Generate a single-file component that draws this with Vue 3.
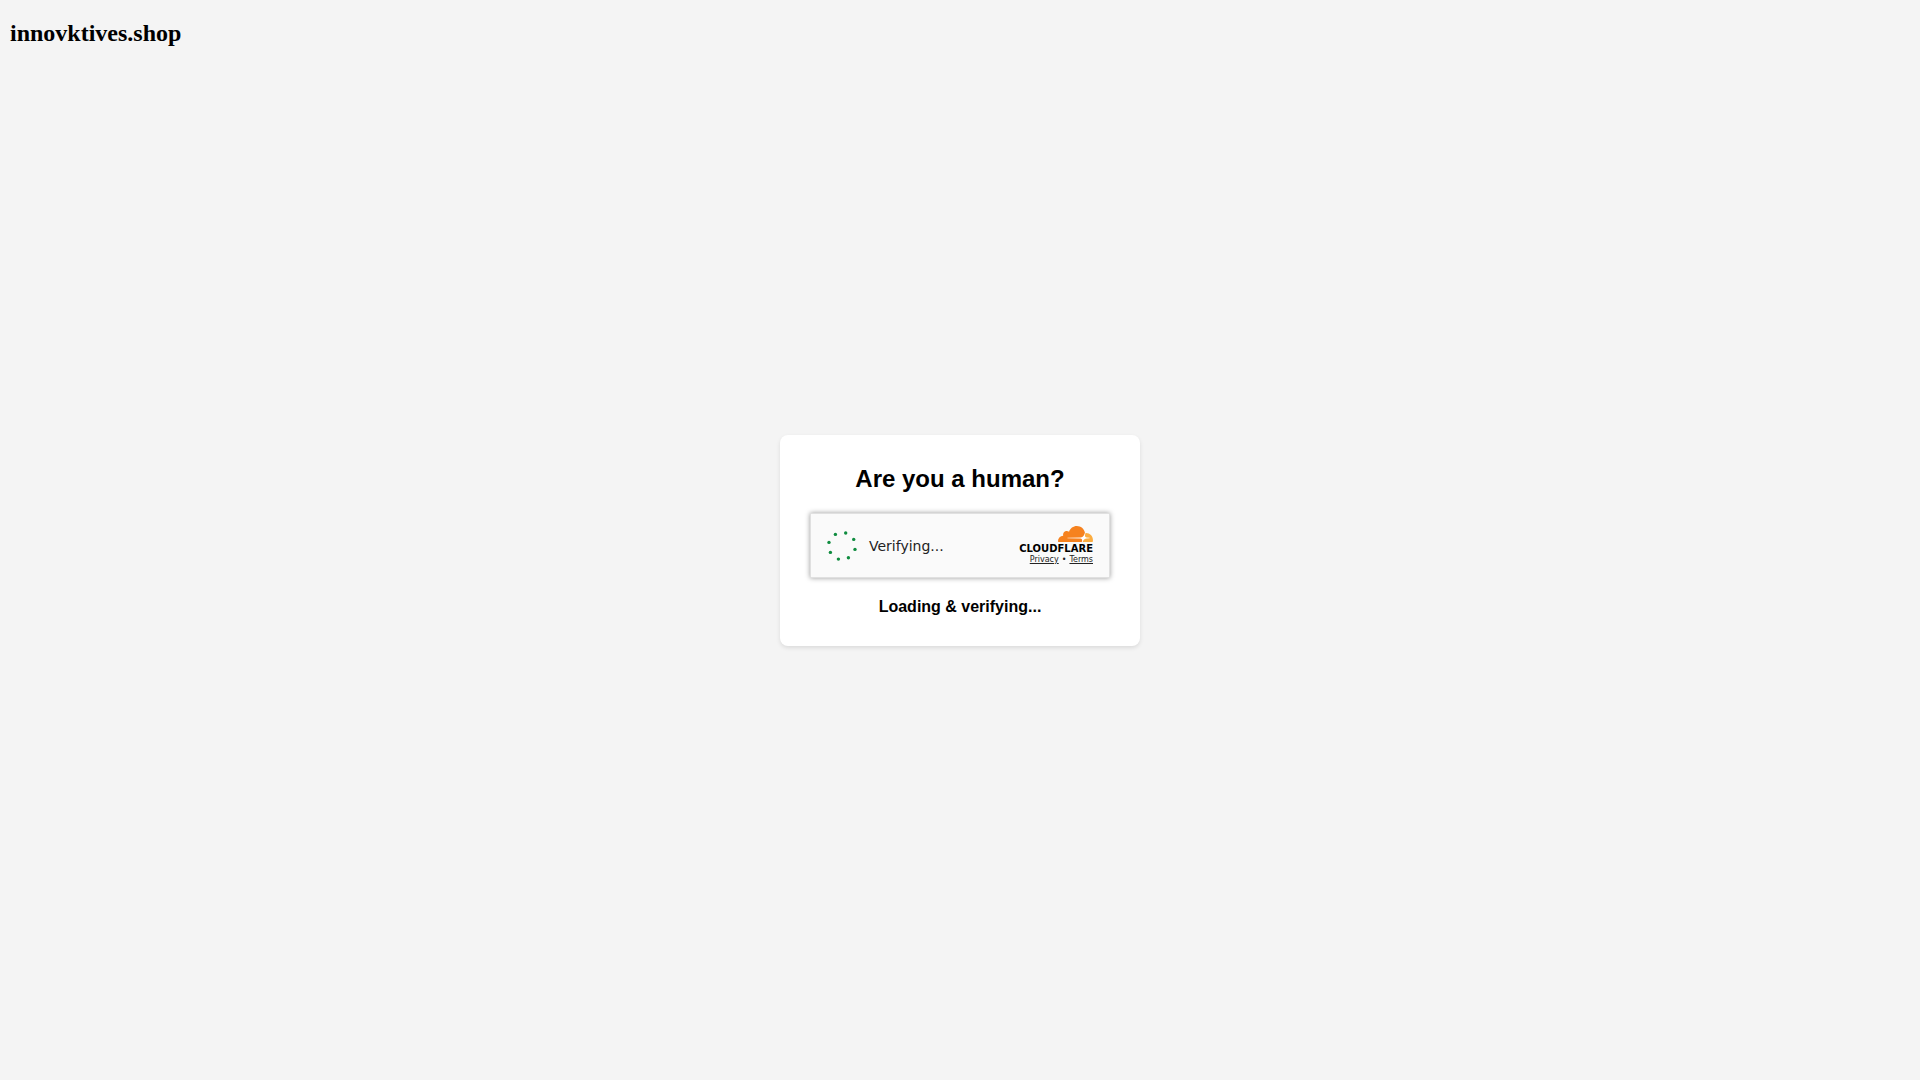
<script setup>
const dots = [
  [8.4, 3.4], [18.7, 2], [26.7, 8.4], [28, 18.4],
  [21.4, 26.8], [11.4, 28.1], [3.4, 21.4], [2, 11.4],
]
</script>

<template>
  <div class="page">
    <h1 class="site">innovktives.shop</h1>
    <main class="card">
      <h2 class="question">Are you a human?</h2>
      <section class="widget">
        <div class="status" role="status">
          <svg class="spinner" viewBox="0 0 30 30" aria-hidden="true">
            <circle v-for="([x, y], i) in dots" :key="i" :cx="x" :cy="y" r="1.7" />
          </svg>
          <span>Verifying...</span>
        </div>
        <div class="brand">
          <svg class="logo" viewBox="0 0 73 26" role="img" aria-label="Cloudflare">
            <path fill="#fff" d="M68.8 10.4L65 8.2L64.3 7.9L48.6 8V16H68.8Z" />
            <path fill="#f6821f" d="M61.8848 15.7841L62.0632 15.1578C62.2758 14.4126 62.1967 13.7239 61.8401 13.2178C61.5118 12.7517 60.9649 12.4773 60.3007 12.4453L47.7201 12.2836C47.6811 12.2829 47.6428 12.2728 47.6083 12.2542C47.5738 12.2356 47.5442 12.209 47.5217 12.1766C47.4996 12.1431 47.4856 12.1049 47.4807 12.0649C47.4758 12.025 47.4801 11.9844 47.4933 11.9465C47.5149 11.8839 47.5541 11.8291 47.6061 11.7888C47.658 11.7486 47.7204 11.7247 47.7856 11.7201L60.4827 11.5566C61.9889 11.4864 63.6196 10.2462 64.1905 8.73372L64.9146 6.81361C64.9443 6.73242 64.951 6.64444 64.9341 6.55957C64.112 2.80652 60.8115 0 56.8652 0C53.2293 0 50.1421 2.38158 49.0347 5.69186C48.2864 5.12186 47.3535 4.85982 46.4228 4.95823C44.6785 5.13401 43.276 6.55928 43.1034 8.32979C43.059 8.77189 43.0915 9.21845 43.1992 9.64918C40.3497 9.73347 38.0645 12.1027 38.0645 15.0151C38.0649 15.2751 38.0838 15.5347 38.1212 15.7919C38.1294 15.8513 38.1584 15.9057 38.2029 15.9452C38.2474 15.9847 38.3044 16.0067 38.3635 16.0071L61.5894 16.0099C61.6616 16.0088 61.7252 15.9862 61.7772 15.9455C61.8293 15.9049 61.867 15.8483 61.8848 15.7841Z" />
            <path fill="#fbad41" d="M66.0758 6.95285C65.9592 6.95285 65.843 6.95582 65.7274 6.96177C65.7087 6.96312 65.6904 6.96719 65.6729 6.97385C65.6426 6.98437 65.6152 7.00219 65.5931 7.02579C65.5711 7.04939 65.555 7.07806 65.5462 7.10936L65.0515 8.84333C64.8389 9.58847 64.918 10.2766 65.2749 10.7827C65.6029 11.2494 66.1498 11.5233 66.814 11.5552L69.4959 11.7186C69.5336 11.7199 69.5705 11.73 69.6037 11.7483C69.6369 11.7666 69.6654 11.7925 69.687 11.8239C69.7092 11.8576 69.7234 11.896 69.7283 11.9363C69.7332 11.9765 69.7288 12.0173 69.7153 12.0555C69.6937 12.118 69.6546 12.1727 69.6028 12.2129C69.5509 12.2531 69.4887 12.2771 69.4236 12.2819L66.6371 12.4453C65.1241 12.5161 63.4937 13.7558 62.9233 15.2682L62.722 15.8022C62.7136 15.8245 62.7105 15.8486 62.713 15.8724C62.7155 15.8961 62.7236 15.9189 62.7365 15.9389C62.7494 15.9589 62.7668 15.9755 62.7873 15.9872C62.8077 15.9988 62.8306 16.0053 62.854 16.006H72.4502C72.5055 16.0066 72.5595 15.9888 72.6039 15.9555C72.6483 15.9221 72.6805 15.875 72.6956 15.8213C72.8654 15.2159 72.951 14.5893 72.95 13.9596C72.9494 10.0972 69.8627 6.96571 66.0758 6.95285Z" />
            <text x="73" y="26" text-anchor="end">CLOUDFLARE</text>
          </svg>
          <div class="terms">
            <a href="#privacy">Privacy</a><span class="dot">•</span><a href="#terms">Terms</a>
          </div>
        </div>
      </section>
      <p class="note">Loading &amp; verifying...</p>
    </main>
  </div>
</template>

<style>
body {
  background: #f4f4f4;
}
</style>

<style scoped>
.page {
  display: grid;
  grid-template-rows: 1fr auto 1fr;
  box-sizing: border-box;
  min-height: 100vh;
  padding-top: 1px;
}
.site {
  margin: 19px 10px 0;
  font: bold 24px/27px "Liberation Serif", serif;
  color: #000;
}
.card {
  justify-self: center;
  box-sizing: border-box;
  width: 360px;
  max-width: 100%;
  padding: 30px;
  border-radius: 8px;
  background: #fff;
  box-shadow: 0 2px 4px rgba(0, 0, 0, 0.1);
  font-family: "Liberation Sans", sans-serif;
  text-align: center;
  color: #000;
}
.question {
  margin: 0 0 20px;
  font-size: 24px;
  line-height: 28px;
}
.widget {
  display: flex;
  align-items: center;
  justify-content: space-between;
  box-sizing: border-box;
  height: 65px;
  padding: 0 16px;
  border: 1px solid #e0e0e0;
  background: #fafafa;
  box-shadow: 0 0 5px rgba(0, 0, 0, 0.4);
  font-family: "DejaVu Sans", sans-serif;
  color: #232323;
}
.status {
  display: flex;
  align-items: center;
  gap: 12px;
  font-size: 14px;
  line-height: 18px;
}
.spinner {
  width: 30px;
  height: 30px;
  fill: #0f8c3f;
}
.logo {
  display: block;
  width: 73px;
  height: 26px;
  overflow: visible;
}
.logo text {
  font: bold 10px "DejaVu Sans", sans-serif;
  fill: #000;
}
.terms {
  display: flex;
  justify-content: flex-end;
  margin-top: 3px;
  font-size: 8px;
  line-height: 10px;
}
.terms a {
  color: #232323;
  text-decoration: underline;
}
.dot {
  margin: 0 3px;
}
.note {
  margin: 20px 0 0;
  font-size: 16px;
  font-weight: bold;
  line-height: 18px;
}
</style>
